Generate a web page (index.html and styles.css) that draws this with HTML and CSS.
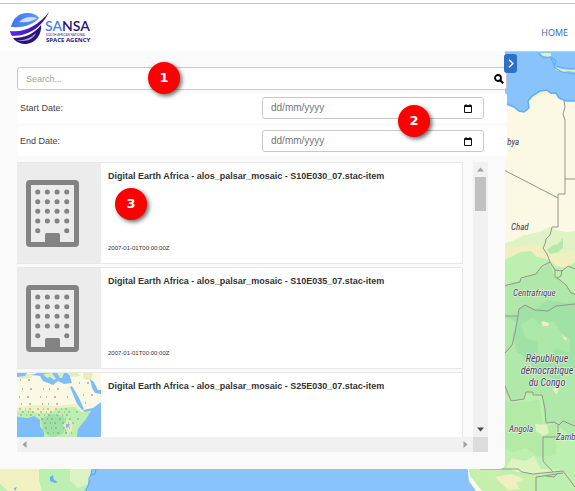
FILE: index.html
```html
<!DOCTYPE html>
<html lang="en">
<head>
<meta charset="utf-8">
<title>SANSA</title>
<link rel="stylesheet" href="styles.css">
</head>
<body>
<svg class="sprite" width="0" height="0" aria-hidden="true">
  <symbol id="building" viewBox="0 0 53 67">
    <rect x="2.5" y="2.5" width="48" height="62" rx="1.5" fill="#ececec" stroke="#838383" stroke-width="5"/>
    <path d="M19 63V54.500q0-1.500 1.500-1.500h12q1.500 0 1.500 1.500V63z" fill="#838383"/>
    <g stroke="#838383" stroke-width="5" stroke-linecap="round" fill="none">
      <path d="M11.700 12h.1M21.300 12h.1M31 12h.1M40.700 12h.1M11.700 21.700h.1M21.300 21.700h.1M31 21.700h.1M40.700 21.700h.1M11.700 31.300h.1M21.300 31.300h.1M31 31.300h.1M40.700 31.300h.1M11.700 41h.1M21.300 41h.1M31 41h.1M40.700 41h.1M11.700 50.700h.1M40.700 50.700h.1"/>
    </g>
  </symbol>
  <symbol id="calendar" viewBox="0 0 8 9">
    <path d="M.5 1.500h7v7h-7zM.5 2.500h7M2 0v2M6 0v2" fill="none" stroke="#111"/>
  </symbol>
</svg>

<header class="topbar">
  <a class="brand" href="#" aria-label="SANSA home">
    <svg class="logo" viewBox="0 0 84 34" width="84" height="34">
      <defs>
        <linearGradient id="swoosh"><stop offset="0" stop-color="#5a2bf0"/><stop offset="1" stop-color="#2d0c8c"/></linearGradient>
        <linearGradient id="sky"><stop offset="0" stop-color="#3f74f2"/><stop offset="1" stop-color="#5f98ff"/></linearGradient>
      </defs>
      <path d="M1 16C3 7 9 2 17 2c6 0 10 2 12 5-5 6-14 10-28 9z" fill="url(#sky)"/>
      <path d="M9 11c5-5 11-6 18-4-4 3-10 5-18 4z" fill="#cfe0ff"/>
      <path d="M0 20c14 2 28-5 39-19-6 13-18 24-37 24C1 23 0 22 0 20z" fill="url(#swoosh)"/>
      <path d="M3 27c12 0 21-4 28-13 1 9-5 18-15 19-5 0-10-2-13-6z" fill="#2a1376"/>
      <path d="M6 29c8 1 14-2 20-7-2 6-10 10-20 7z" fill="#a79bd8"/>
      <text class="logo-name" x="35" y="20"><tspan class="logo-light">SA</tspan><tspan>NSA</tspan></text>
      <text class="logo-small" x="36" y="25">SOUTH AFRICAN NATIONAL</text>
      <text class="logo-sub" x="36" y="31">SPACE AGENCY</text>
    </svg>
  </a>
  <nav><a class="nav-link" href="#">HOME</a></nav>
</header>

<main class="stage">
  <svg class="map" viewBox="0 52 575 439" preserveAspectRatio="xMinYMin slice" role="img" aria-label="Map of Africa">
    <rect y="52" width="575" height="439" fill="#89c3fc"/>
    <path d="M0 460H94L91 472 88 476V484L85 491H0z" fill="#bdf0b0"/>
    <path d="M0 460H39V480L42 491H8L0 484z" fill="#f0f0c0"/>
    <path d="M70 469H92L88 484 78 488 70 480z" fill="#dbf3c2"/>
    <path d="M50 477l3-2 1 5 4 2-3 1-5-2zM14 488l3-1-2 4z" fill="#64b0f5"/>
    <path d="M92 469l-1 6 4-1 1-5M91 475l-2 3v6l-4 7" fill="none" stroke="#5aa5ee"/>
    <path d="M500 100L507 105 514 107 519 111 524 112 529 108 528 101 532 97 540 92 547 91 551 94 556 94 559 99 566 101 575 101V491H480L475 482 469 477 467 465V460H500z" fill="#fbf9e3"/>
    <path d="M530 101q1-6 12-10 6-1 4 1-9 3-16 9z" fill="#f0efbf"/>
    <path d="M500 106L507 104 514 107 519 111 524 112 529 108 528 101 532 96 540 91 547 90 551 93 556 93 559 98 566 101 575 101" fill="none" stroke="#62aef5" stroke-width="1.500"/>
    <path d="M540 53h11v3l-3 2-2-2-3 0zM555 67l7 2 9 1 4-1v3l-7-1-4 1-9-2z" fill="#dff0b8"/>
    <path d="M538 53l6 5 6-1 3 5 2 6 7 4 13 2M556 66l9 2 10 1M551 57l5 4-2 6" fill="none" stroke="#62aef5" stroke-width="1.200"/>
    <path d="M500 244L512 241 524 235 539 232 550 227 556 230 566 232 575 231V300H500z" fill="#dff3c5"/>
    <path d="M500 246L517 247 536 244 546 249 558 254 575 250V272H500z" fill="#f0efbf"/>
    <path d="M500 262L509 258 520 252 531 251 537 257 547 259 556 266 566 268 575 262V491H481L469 477 467 460H500z" fill="#bdf0b0"/>
    <path d="M547 250l6-5 5-1 5-6 0 10-5 4-8 2z" fill="#b6e8ae"/>
    <path d="M500 288L520 280 535 274 549 263 555 277 565 284 575 294V440L558 425 545 422 542 395 526 393 523 400 511 401 500 386z" fill="#b0e8a9"/>
    <path d="M505 317h13l1-8 6-4 10 5 12-10 10 1 8 2 10-1v66l-12 3-4 11-13-8-12 0-5-14-12-8-5-18 5-12z" fill="#a0e2a5"/>
    <path d="M521 325l12-8 7 8 14-4 7 12 9 6v14l-14-5-7 12-11-6 0-13-12-2z" fill="#ace8aa"/>
    <path d="M541 323l2-2 6 2-1 3h-5zM562 334l2 3 3 1-1 3-3-3zM553 388l6 0-2 6-2-1z" fill="#f0efbf"/>
    <path d="M500 396l11 7 16-1 12-3 4 26 13 0v30l-18 2-12-9-13 4-13-5z" fill="#b2eaa6"/>
    <path d="M535 424l12 1 2 8-6 3-7-5zM506 467l6-9 13 3 9-5 7 13 20 1-20 5-25-3z" fill="#ddf3c0"/>
    <path d="M470 469h30l13 8 11-2 13 4-2 12H481z" fill="#c6efab"/>
    <path d="M495 477l17-3 12 5-8 4 4 6-12 1z" fill="#f0efbf"/>
    <path d="M467 460l3 16 12 15h-6l-7-10z" fill="#fffbe8"/>
    <g fill="none" stroke="#93958a" stroke-width="1">
      <path d="M564 101l1 6-2 7 2 6v74h-7v33h-6M500 168l58 30M565 179h10"/>
      <path d="M552 227l-2 8-4 4-1 5-2 4 4 6 3 8M500 289l7-4 13-3 1-4 15-4 6-8 8-4 5 8v7l5 3 6 5 5 8 9 3M555 270l7 1 6-5 7 3M557 278l4-2 1-6"/>
      <path d="M500 316h18l1-7 6-4 10 5 13 1 8-5 19-2M518 316l-3 17-3 12-7 8M500 378l5 8 6 15 13-2 2-7 7 0v3h9l3 14 1 14 8-1 5 3 4-4 12 5M558 425v12h-15v24l10 11"/>
      <path d="M480 469h38l4 3 11 2 30-3 12 16M536 491v-14l27-4M546 476l8 1 4-4"/>
    </g>
    <g class="map-label">
      <text x="501" y="145">Libya</text>
      <text x="511" y="230">Chad</text>
      <text x="513" y="296">Centrafrique</text>
      <text x="509" y="432">Angola</text>
      <text x="556" y="440">Zambie</text>
    </g>
    <g class="map-label map-label-large">
      <text x="547" y="362">République</text>
      <text x="547" y="374">démocratique</text>
      <text x="547" y="386">du Congo</text>
    </g>
  </svg>

  <section class="panel">
    <form class="filters">
      <div class="search">
        <input class="search-input" type="text" placeholder="Search..." aria-label="Search">
        <button class="icon-button" type="button" aria-label="Search">
          <svg viewBox="0 0 10 10" width="10" height="10"><circle cx="4" cy="4" r="3" fill="none" stroke="#000" stroke-width="1.800"/><path d="M6.200 6.200l3 3" stroke="#000" stroke-width="2"/></svg>
        </button>
      </div>
      <div class="field">
        <label for="start-date">Start Date:</label>
        <div class="date">
          <input class="date-input" id="start-date" type="text" placeholder="dd/mm/yyyy">
          <button class="icon-button" type="button" aria-label="Pick start date"><svg width="8" height="9"><use href="#calendar"/></svg></button>
        </div>
      </div>
      <div class="field">
        <label for="end-date">End Date:</label>
        <div class="date">
          <input class="date-input" id="end-date" type="text" placeholder="dd/mm/yyyy">
          <button class="icon-button" type="button" aria-label="Pick end date"><svg width="8" height="9"><use href="#calendar"/></svg></button>
        </div>
      </div>
      <span class="badge badge-search">1</span>
      <span class="badge badge-dates">2</span>
    </form>

    <div class="results">
      <div class="viewport">
        <article class="card">
          <div class="thumb"><svg width="53" height="67"><use href="#building"/></svg></div>
          <div class="card-body">
            <h2>Digital Earth Africa - alos_palsar_mosaic - S10E030_07.stac-item</h2>
            <time>2007-01-01T00:00:00Z</time>
          </div>
          <span class="badge badge-result">3</span>
        </article>
        <article class="card">
          <div class="thumb"><svg width="53" height="67"><use href="#building"/></svg></div>
          <div class="card-body">
            <h2>Digital Earth Africa - alos_palsar_mosaic - S10E035_07.stac-item</h2>
            <time>2007-01-01T00:00:00Z</time>
          </div>
        </article>
        <article class="card">
          <div class="thumb thumb-map">
            <svg viewBox="0 0 84 102" width="84" height="102">
              <rect width="84" height="102" fill="#fbf9e3"/>
              <path d="M0 34l20-2 20 1 18-2 6 5 9 4-1 62H0z" fill="#f0efbf"/>
              <path d="M0 38l12-1 6 3 14 0 12-5 14-1 6 5 9 0 2-3-4 12-10 15v39H0z" fill="#bdf0b0"/>
              <path d="M24 46l10-5 12 2 4 8-4 10-12 4-8-8z" fill="#a0e2a5"/>
              <path d="M46 52l5-5 5 2-1 8-5 6z" fill="#ece9b5"/>
              <path d="M66 0l10 0-2 7-7-1zM0 3l7-2 10 0-3 4-10 1z" fill="#e6edba"/>
              <path d="M0 0h10l-2 3-8 1zM20 0h36l-3 4 2 6-8 1-6-3-5 4-10-4-3-5-8-1zM53 14l2-1 3 5 4 7 5 11-2 1-5-6zM73 6l4 3 4 8 3 0v4l-6-1-3-5zM66 37l10-2 8-6v73H60V62l1-6 8-10 5-8-6 1zM0 44l11 1 6-2 6 4 0 6 4 6 0 43H0zM49 51l4 0-1 3-3 1zM48 56l1 0 1 5-1 0z" fill="#7fbdfa"/>
              <path d="M26 1l4 4 3-1 4 3 2-1-4-6zM40 0l3 5 2 0 2-5zM50 0l10 0 4 3-10 1z" fill="#dcefb8"/>
              <path d="M3 7h16M5 16h46M2 24h50M4 31h48M62 10h10M66 22h14M68 30h8" stroke="#817d83" stroke-width="1" stroke-dasharray="1 7 2 11 1 5"/>
              <path d="M2 36h50M5 39h58M3 42h52M24 46h42M27 50h34M28 55h28M30 60h28" stroke="#6f7d78" stroke-width="1" stroke-dasharray="2 4 1 3 2 6" opacity=".7"/>
            </svg>
          </div>
          <div class="card-body">
            <h2>Digital Earth Africa - alos_palsar_mosaic - S25E030_07.stac-item</h2>
          </div>
        </article>
      </div>
      <div class="bar bar-vertical">
        <svg width="7" height="5"><path d="M0 4.500L3.500.500 7 4.500z" fill="#a0a0a0"/></svg>
        <span class="bar-thumb"></span>
        <svg width="7" height="5"><path d="M0 .500h7L3.500 4.500z" fill="#484848"/></svg>
      </div>
      <div class="bar">
        <svg width="5" height="7"><path d="M4.500 0v7L.500 3.500z" fill="#a0a0a0"/></svg>
        <svg width="5" height="7"><path d="M.500 0v7l4-3.500z" fill="#a0a0a0"/></svg>
      </div>
      <div class="bar-corner"></div>
    </div>
    <button class="toggle" type="button" aria-label="Collapse panel">
      <svg viewBox="0 0 6 9" width="6" height="9"><path d="M1 .800l4 3.700-4 3.700" fill="none" stroke="#fff" stroke-width="1.400"/></svg>
    </button>
  </section>
</main>
</body>
</html>
```
FILE: styles.css
```css
* {
  box-sizing: border-box;
}

body {
  margin: 0;
  padding-top: 3px;
  min-height: 100vh;
  display: flex;
  flex-direction: column;
  background: #fff;
  color: #333;
  font: 9px/12px "Liberation Sans", sans-serif;
}

svg {
  display: block;
}

.sprite {
  position: absolute;
}

.topbar {
  display: flex;
  justify-content: space-between;
  align-items: center;
  padding: 7px 7px 6px 10px;
  border-top: 1px solid #c4c4c4;
}

.logo-name {
  font: 600 14px Lato, sans-serif;
  fill: #2a1376;
}

.logo-light {
  fill: #4b80f5;
}

.logo-small {
  font: 3px Lato, sans-serif;
  fill: #2a1376;
}

.logo-sub {
  font: 700 6px "Open Sans", sans-serif;
  fill: #2a1376;
}

.nav-link {
  display: block;
  padding-top: 10px;
  color: #3f62b4;
  font: 9px/12px "Open Sans", sans-serif;
  text-decoration: none;
}

.stage {
  position: relative;
  flex: 1;
  overflow: hidden;
}

.map {
  position: absolute;
  top: 0;
  left: 0;
  width: 100%;
  height: 100%;
  border-top: 1px solid #c9cdd0;
}

.map-label {
  font: italic 400 9px "Roboto Condensed", Roboto, sans-serif;
  fill: #403d58;
  stroke: #f5f7ee;
  stroke-width: 1px;
  paint-order: stroke;
}

.map-label-large {
  font-size: 10px;
  text-anchor: middle;
}

.panel {
  position: relative;
  margin-right: 70px;
  padding: 16px 17px 17px;
  background: #fafafa;
  border-radius: 0 0 5px 0;
}

.filters {
  position: relative;
  display: grid;
  gap: 3px;
  margin-right: -19px;
  margin-bottom: 6px;
}

.search,
.date {
  display: flex;
  align-items: center;
  background: #fff;
  border: 1px solid #c8c8c8;
  border-radius: 3px;
}

.search {
  height: 23px;
  padding: 0 2px 0 8px;
}

.date {
  height: 22px;
  padding: 0 11px 0 8px;
}

.search-input,
.date-input {
  flex: 1;
  min-width: 0;
  padding: 0;
  border: 0;
  outline: 0;
  background: none;
  font: 9px/12px "Liberation Sans", sans-serif;
}

.date-input {
  font-size: 10px;
}

.search-input::placeholder {
  color: #a0a0a0;
}

.date-input::placeholder {
  color: #757575;
}

.icon-button {
  padding: 0;
  border: 0;
  background: none;
}

.field {
  display: grid;
  grid-template-columns: 1fr 222px;
  align-items: center;
  height: 30px;
  padding: 0 23px 0 3px;
  background: #fff;
  border-radius: 3px;
  color: #444;
}

.badge {
  position: absolute;
  z-index: 1;
  width: 32px;
  height: 32px;
  border-radius: 50%;
  background: #f00;
  box-shadow: 2px 2px 4px rgba(0, 0, 0, 0.6);
  color: #fff;
  font: bold 13px/32px "DejaVu Sans", sans-serif;
  text-align: center;
}

.badge-search {
  left: 131px;
  top: -5px;
}

.badge-dates {
  left: 381px;
  top: 38px;
}

.badge-result {
  left: 98px;
  top: 25px;
}

.results {
  display: grid;
  grid-template-columns: 1fr 15px;
  grid-template-rows: 275px 15px;
}

.viewport {
  display: flex;
  flex-direction: column;
  gap: 3px;
  padding-right: 10px;
  overflow: hidden;
}

.card {
  position: relative;
  display: flex;
  flex: none;
  height: 102px;
  background: #fff;
  border: 1px solid #e8e8e8;
  border-left: 0;
}

.thumb {
  display: flex;
  flex: none;
  align-items: center;
  width: 84px;
  padding-left: 9px;
  overflow: hidden;
  background: #ececec;
}

.thumb-map {
  align-items: flex-start;
  padding-left: 0;
}

.card-body {
  display: flex;
  flex: 1;
  flex-direction: column;
  justify-content: space-between;
  padding: 7px 7px 9px;
}

.card h2 {
  margin: 0;
  font: bold 9px/12px "Liberation Sans", sans-serif;
}

.card time {
  font-size: 6px;
}

.bar {
  display: flex;
  align-items: center;
  justify-content: space-between;
  padding: 0 5px;
  background: #f1f1f1;
}

.bar-vertical {
  flex-direction: column;
  padding: 5px 0;
}

.bar-thumb {
  width: 11px;
  height: 34px;
  margin-top: 5px;
  margin-bottom: auto;
  background: #c1c1c1;
}

.bar-corner {
  background: #dcdcdc;
}

.toggle {
  position: absolute;
  top: 3px;
  right: -12px;
  display: flex;
  align-items: center;
  justify-content: center;
  width: 13px;
  height: 19px;
  padding: 0;
  border: 0;
  border-radius: 3px;
  background: #2d70c9;
}
```
